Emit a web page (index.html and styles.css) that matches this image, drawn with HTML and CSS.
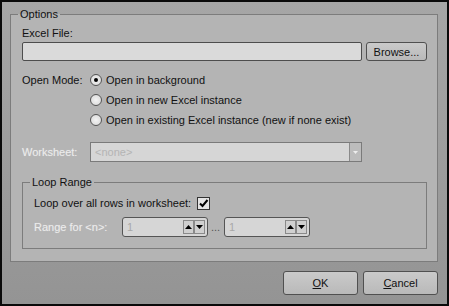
FILE: index.html
```html
<!DOCTYPE html>
<html>
  <head>
    <meta charset="UTF-8" />
    <title>Options</title>
    <link rel="stylesheet" href="styles.css">
  </head>

  <body>
    <div class="window">
      <fieldset class="group options">
        <legend>Options</legend>
        <div class="label">Excel File:</div>
        <div class="file-row">
          <div class="textbox"></div>
          <button class="btn browse" type="button">Browse...</button>
        </div>

        <div class="mode-row">
          <div class="field-label">Open Mode:</div>
          <div class="radios">
            <div class="radio"><span class="circle checked"></span>Open in background</div>
            <div class="radio"><span class="circle"></span>Open in new Excel instance</div>
            <div class="radio"><span class="circle"></span>Open in existing Excel instance (new if none exist)</div>
          </div>
        </div>

        <div class="sheet-row">
          <div class="field-label disabled">Worksheet:</div>
          <div class="combo">
            <span class="combo-text">&lt;none&gt;</span>
            <span class="drop">
              <svg width="5" height="3" viewBox="0 0 5 3"><path d="M0 0h5L2.5 3z" fill="#eee"/></svg>
            </span>
          </div>
        </div>

        <fieldset class="group loop">
          <legend>Loop Range</legend>
          <div class="check-row">
            Loop over all rows in worksheet:
            <span class="check">
              <svg width="11" height="11" viewBox="0 0 11 11"><path d="M2 5.5l2.5 2.5 5-6" fill="none" stroke="#000" stroke-width="2"/></svg>
            </span>
          </div>
          <div class="range-row">
            <div class="range-label disabled">Range for &lt;n&gt;:</div>
            <div class="spin">
              <span class="spin-value">1</span>
              <span class="arrows">
                <span class="arrow"><svg width="7" height="4" viewBox="0 0 7 4"><path d="M0 4h7L3.5 0z" fill="#000"/></svg></span>
                <span class="arrow"><svg width="7" height="4" viewBox="0 0 7 4"><path d="M0 0h7L3.5 4z" fill="#000"/></svg></span>
              </span>
            </div>
            <span class="dots">...</span>
            <div class="spin">
              <span class="spin-value">1</span>
              <span class="arrows">
                <span class="arrow"><svg width="7" height="4" viewBox="0 0 7 4"><path d="M0 4h7L3.5 0z" fill="#000"/></svg></span>
                <span class="arrow"><svg width="7" height="4" viewBox="0 0 7 4"><path d="M0 0h7L3.5 4z" fill="#000"/></svg></span>
              </span>
            </div>
          </div>
        </fieldset>
      </fieldset>

      <div class="footer">
        <button class="btn dialog-btn" type="button"><u>O</u>K</button>
        <button class="btn dialog-btn" type="button"><u>C</u>ancel</button>
      </div>
    </div>
  </body>
</html>
```

FILE: styles.css
```css
* {
  box-sizing: border-box;
}

body {
  margin: 0;
  font-family: "Liberation Sans", Arial, sans-serif;
  font-size: 11px;
  line-height: 13px;
  color: #111;
  background-color: #000;
}

.window {
  width: 449px;
  height: 306px;
  border: 2px solid #0a0a0a;
  padding: 6px 9px 0 8px;
  background: linear-gradient(#a6a6a6, #949494);
}

.group {
  margin: 0;
  border: 1px solid #7c7c7c;
  background-color: #b4b4b4;
  min-width: 0;
}

.group legend {
  padding: 0 2px;
  margin-left: -4px;
  line-height: 13px;
}

.options {
  padding: 6px 10px 12px 11px;
}

.file-row {
  display: flex;
  gap: 4px;
  margin-top: 2px;
  height: 19px;
}

.textbox {
  flex: 1;
  background-color: #dadada;
  border: 1px solid #4d4d4d;
  border-radius: 2px;
}

.btn {
  font-family: inherit;
  font-size: 11px;
  color: #111;
  border: 1px solid #505050;
  border-radius: 3px;
  background: linear-gradient(#cacaca, #b9b9b9);
  padding: 0;
  cursor: pointer;
}

.browse {
  width: 61px;
}

.mode-row {
  display: flex;
  margin-top: 9px;
}

.field-label {
  width: 68px;
  height: 20px;
  line-height: 20px;
  flex: none;
}

.disabled {
  color: #ececec;
  text-shadow: 0 0 1px #c8c8c8;
}

.radio {
  display: flex;
  align-items: center;
  gap: 4px;
  height: 20px;
}

.circle {
  width: 12px;
  height: 12px;
  border: 1px solid #555;
  border-radius: 50%;
  background: radial-gradient(#f4f4f4, #d6d6d6);
  display: flex;
  align-items: center;
  justify-content: center;
}

.circle.checked::after {
  content: "";
  width: 4px;
  height: 4px;
  border-radius: 50%;
  background-color: #000;
}

.sheet-row {
  display: flex;
  margin-top: 12px;
  height: 20px;
}

.combo {
  width: 272px;
  display: flex;
  background-color: #d6d6d6;
  border: 1px solid #7a7a7a;
}

.combo-text {
  flex: 1;
  padding-left: 4px;
  line-height: 18px;
  color: #b4b4b4;
}

.drop {
  width: 12px;
  border-left: 1px solid #8a8a8a;
  background-color: #bcbcbc;
  display: flex;
  align-items: center;
  justify-content: center;
}

.loop {
  margin-top: 14px;
  padding: 7px 10px 11px 11px;
}

.check-row {
  display: flex;
  align-items: center;
  height: 14px;
}

.check {
  width: 13px;
  height: 13px;
  margin-left: 6px;
  border: 1px solid #333;
  background-color: #e4e4e4;
  display: flex;
  align-items: center;
  justify-content: center;
}

.range-row {
  display: flex;
  align-items: center;
  margin-top: 7px;
  height: 20px;
}

.range-label {
  width: 88px;
  flex: none;
}

.spin {
  width: 86px;
  height: 20px;
  display: flex;
  align-items: center;
  border: 1px solid #555;
  border-radius: 3px;
  background-color: #d6d6d6;
  padding-right: 2px;
}

.spin-value {
  flex: 1;
  padding-left: 4px;
  color: #a8a8a8;
}

.arrows {
  display: flex;
  height: 14px;
}

.arrow {
  width: 11px;
  height: 14px;
  border: 1px solid #8a8a8a;
  background-color: #d0d0d0;
  display: flex;
  align-items: center;
  justify-content: center;
}

.dots {
  width: 16px;
  padding-left: 3px;
  color: #555;
}

.footer {
  display: flex;
  justify-content: flex-end;
  gap: 5px;
  margin-top: 9px;
}

.dialog-btn {
  width: 75px;
  height: 24px;
}
```
